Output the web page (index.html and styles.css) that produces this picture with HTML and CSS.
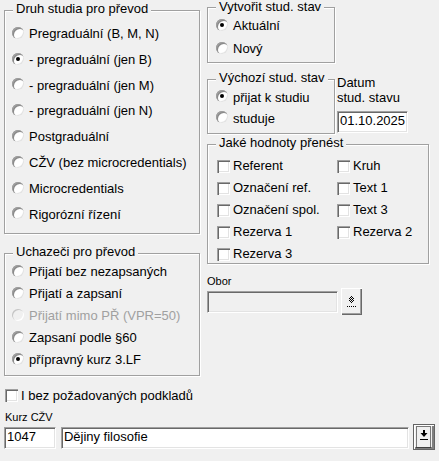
FILE: index.html
```html
<!DOCTYPE html>
<html lang="cs">
<head>
<meta charset="utf-8">
<title>Převod</title>
<link rel="stylesheet" href="styles.css">
</head>
<body>
<div class="page">
  <div class="top">
    <div class="col-left">
      <div class="group g-druh">
        <div class="group-title">Druh studia pro převod</div>
        <div class="opts opts-druh">
          <div class="opt"><span class="radio"></span>Pregraduální (B, M, N)</div>
          <div class="opt"><span class="radio checked"></span>- pregraduální (jen B)</div>
          <div class="opt"><span class="radio"></span>- pregraduální (jen M)</div>
          <div class="opt"><span class="radio"></span>- pregraduální (jen N)</div>
          <div class="opt"><span class="radio"></span>Postgraduální</div>
          <div class="opt"><span class="radio"></span>CŽV (bez microcredentials)</div>
          <div class="opt"><span class="radio"></span>Microcredentials</div>
          <div class="opt"><span class="radio"></span>Rigorózní řízení</div>
        </div>
      </div>
      <div class="group g-uch">
        <div class="group-title">Uchazeči pro převod</div>
        <div class="opts opts-uch">
          <div class="opt"><span class="radio"></span>Přijatí bez nezapsaných</div>
          <div class="opt"><span class="radio"></span>Přijatí a zapsaní</div>
          <div class="opt disabled"><span class="radio"></span>Přijatí mimo PŘ (VPR=50)</div>
          <div class="opt"><span class="radio"></span>Zapsaní podle §60</div>
          <div class="opt"><span class="radio checked"></span>přípravný kurz 3.LF</div>
        </div>
      </div>
    </div>

    <div class="col-right">
      <div class="group g-vytvorit">
        <div class="group-title title-top">Vytvořit stud. stav</div>
        <div class="opts opts-vytvorit">
          <div class="opt"><span class="radio checked"></span>Aktuální</div>
          <div class="opt"><span class="radio"></span>Nový</div>
        </div>
      </div>

      <div class="row-vychozi">
        <div class="group g-vychozi">
          <div class="group-title">Výchozí stud. stav</div>
          <div class="opts opts-vychozi">
            <div class="opt"><span class="radio checked"></span>přijat k studiu</div>
            <div class="opt"><span class="radio"></span>studuje</div>
          </div>
        </div>
        <div class="datum">
          <div class="datum-label">Datum<br>stud. stavu</div>
          <div class="field field-date">01.10.2025</div>
        </div>
      </div>

      <div class="group g-jake">
        <div class="group-title">Jaké hodnoty přenést</div>
        <div class="checks">
          <div class="opt"><span class="check"></span>Referent</div>
          <div class="opt"><span class="check"></span>Kruh</div>
          <div class="opt"><span class="check"></span>Označení ref.</div>
          <div class="opt"><span class="check"></span>Text 1</div>
          <div class="opt"><span class="check"></span>Označení spol.</div>
          <div class="opt"><span class="check"></span>Text 3</div>
          <div class="opt"><span class="check"></span>Rezerva 1</div>
          <div class="opt"><span class="check"></span>Rezerva 2</div>
          <div class="opt"><span class="check"></span>Rezerva 3</div>
        </div>
      </div>

      <div class="small-label obor-label">Obor</div>
      <div class="obor-row">
        <div class="field field-obor"></div>
        <div class="btn btn-obor">
          <svg width="21" height="27" viewBox="0 0 21 27" aria-hidden="true">
            <g fill="#000">
              <rect x="10" y="8" width="1" height="1"/>
              <rect x="9" y="9" width="1" height="1"/><rect x="11" y="9" width="1" height="1"/>
              <rect x="8" y="10" width="1" height="1"/><rect x="10" y="10" width="1" height="1"/><rect x="12" y="10" width="1" height="1"/>
              <rect x="9" y="11" width="1" height="1"/><rect x="11" y="11" width="1" height="1"/>
              <rect x="8" y="12" width="1" height="1"/><rect x="10" y="12" width="1" height="1"/><rect x="12" y="12" width="1" height="1"/>
              <rect x="9" y="13" width="1" height="1"/><rect x="11" y="13" width="1" height="1"/>
              <rect x="10" y="14" width="1" height="1"/>
              <rect x="6" y="18" width="1" height="1"/><rect x="8" y="18" width="1" height="1"/><rect x="10" y="18" width="1" height="1"/><rect x="12" y="18" width="1" height="1"/><rect x="14" y="18" width="1" height="1"/>
            </g>
          </svg>
        </div>
      </div>
    </div>
  </div>

  <div class="opt bez-row"><span class="check"></span>I bez požadovaných podkladů</div>
  <div class="small-label kurz-label">Kurz CŽV</div>
  <div class="kurz-row">
    <div class="field field-kod">1047</div>
    <div class="field field-nazev">Dějiny filosofie</div>
    <div class="btn btn-kurz">
      <svg width="22" height="26" viewBox="0 0 22 26" aria-hidden="true">
        <rect x="3.5" y="2.5" width="14" height="21" fill="none" stroke="#000" stroke-width="1" stroke-dasharray="1 1"/>
        <path d="M10 6h2v3h2.5l-3.5 4l-3.5-4H10z" fill="#000"/>
        <rect x="7" y="15" width="8" height="1" fill="#000"/>
      </svg>
    </div>
  </div>
</div>
</body>
</html>
```

FILE: styles.css
```css
* {
  box-sizing: border-box;
}

html, body {
  margin: 0;
  background: #f0f0f0;
}

body {
  font-family: "Liberation Sans", Arial, sans-serif;
  font-size: 13px;
  color: #000;
}

.page {
  width: 439px;
  height: 461px;
  padding: 0 4px;
  overflow: hidden;
}

.top {
  display: grid;
  grid-template-columns: 196px 222px;
  column-gap: 7px;
  align-items: start;
}

.col-left {
  padding-top: 10px;
  display: flex;
  flex-direction: column;
  gap: 19px;
}

.col-right {
  padding-top: 7px;
  display: flex;
  flex-direction: column;
  align-items: flex-start;
}

/* etched group box */
.group {
  border: 1px solid #a0a0a0;
  box-shadow: inset 1px 1px 0 #fff, 1px 1px 0 #fff;
}

.group-title {
  width: max-content;
  margin: -10px 0 0 8px;
  padding: 0 3px;
  background: #f0f0f0;
  line-height: 15px;
  white-space: nowrap;
}

.group-title.title-top {
  margin-top: -8px;
  line-height: 13px;
}

.g-druh { height: 224px; }
.g-uch { height: 123px; }
.g-vytvorit { width: 128px; height: 56px; }
.g-vychozi { width: 128px; height: 55px; margin-top: 4px; }
.g-jake { width: 222px; height: 120px; margin-top: 10px; }

.opts-druh { padding: 5px 0 0 7px; }
.opts-druh .opt { height: 25.8px; line-height: 25.8px; }

.opts-uch { padding: 2px 0 0 7px; }
.opts-uch .opt { height: 22px; line-height: 22px; }

.opts-vytvorit { padding: 1px 0 0 8px; }
.opts-vytvorit .opt { height: 23.4px; line-height: 23.4px; }

.opts-vychozi { padding: 1.5px 0 0 8px; }
.opts-vychozi .opt { height: 21px; line-height: 21px; }

.opt {
  display: flex;
  align-items: center;
  white-space: nowrap;
}

.opt.disabled {
  color: #a0a0a0;
}

.radio {
  flex: none;
  width: 12px;
  height: 12px;
  margin: 0 5px 2px 0;
  border-radius: 50%;
  background: #fff;
  box-shadow: inset 1px 1px 0 #a0a0a0, inset 2px 2px 0 #8a8a8a, inset -1px -1px 0 #e3e3e3;
  display: flex;
  align-items: center;
  justify-content: center;
}

.radio.checked::after {
  content: "";
  width: 4px;
  height: 4px;
  border-radius: 50%;
  background: #000;
}

.opt.disabled .radio {
  background: #f0f0f0;
  box-shadow: inset 1px 1px 0 #c4c4c4, inset -1px -1px 0 #fff;
}

.check {
  flex: none;
  width: 13px;
  height: 13px;
  margin-right: 3px;
  background: #fff;
  box-shadow: inset 1px 1px 0 #a0a0a0, inset 2px 2px 0 #696969, inset -1px -1px 0 #fff, inset -2px -2px 0 #e3e3e3;
}

.checks {
  padding: 5px 0 0 9px;
  display: grid;
  grid-template-columns: 120px auto;
  grid-auto-rows: 22px;
}

.checks .opt {
  line-height: 22px;
}

.row-vychozi {
  margin-top: 12px;
  display: flex;
  align-items: flex-start;
}

.datum {
  margin-left: 2px;
}

.datum-label {
  line-height: 15px;
  white-space: nowrap;
}

/* sunken edit field */
.field {
  height: 22px;
  padding: 0 2px;
  border: 1px solid;
  border-color: #a0a0a0 #fff #fff #a0a0a0;
  background: #fff;
  box-shadow: inset 1px 1px 0 #696969, inset -1px -1px 0 #e3e3e3;
  line-height: 18px;
  white-space: nowrap;
  overflow: hidden;
}

.field-date {
  width: 71px;
  margin-top: 6px;
}

.small-label {
  font-size: 11px;
  line-height: 13px;
  white-space: nowrap;
}

.obor-label {
  margin-top: 11px;
}

.obor-row {
  display: flex;
  align-items: flex-start;
}

.field-obor {
  width: 131px;
  margin-top: 3px;
  background: #f0f0f0;
}

.btn {
  flex: none;
  background: #f0f0f0;
}

.btn svg {
  display: block;
}

.btn-obor {
  width: 21px;
  height: 27px;
  margin-left: 3px;
  box-shadow: inset 1px 1px 0 #fff, inset -1px -1px 0 #696969, inset -2px -2px 0 #a0a0a0;
}

.bez-row {
  margin-top: 12px;
  height: 15px;
  line-height: 15px;
}

.bez-row .check {
  margin-left: 1px;
}

.kurz-label {
  margin: 8px 0 0 1px;
}

.kurz-row {
  display: flex;
  align-items: flex-start;
}

.field-kod {
  width: 52px;
  margin-top: 3px;
}

.field-nazev {
  width: 349px;
  margin: 3px 0 0 5px;
}

.btn-kurz {
  width: 22px;
  height: 26px;
  margin-left: 4px;
  box-shadow: inset 1px 1px 0 #646464, inset -1px -1px 0 #646464, inset 2px 2px 0 #fff, inset -3px -3px 0 #808080;
}
```
